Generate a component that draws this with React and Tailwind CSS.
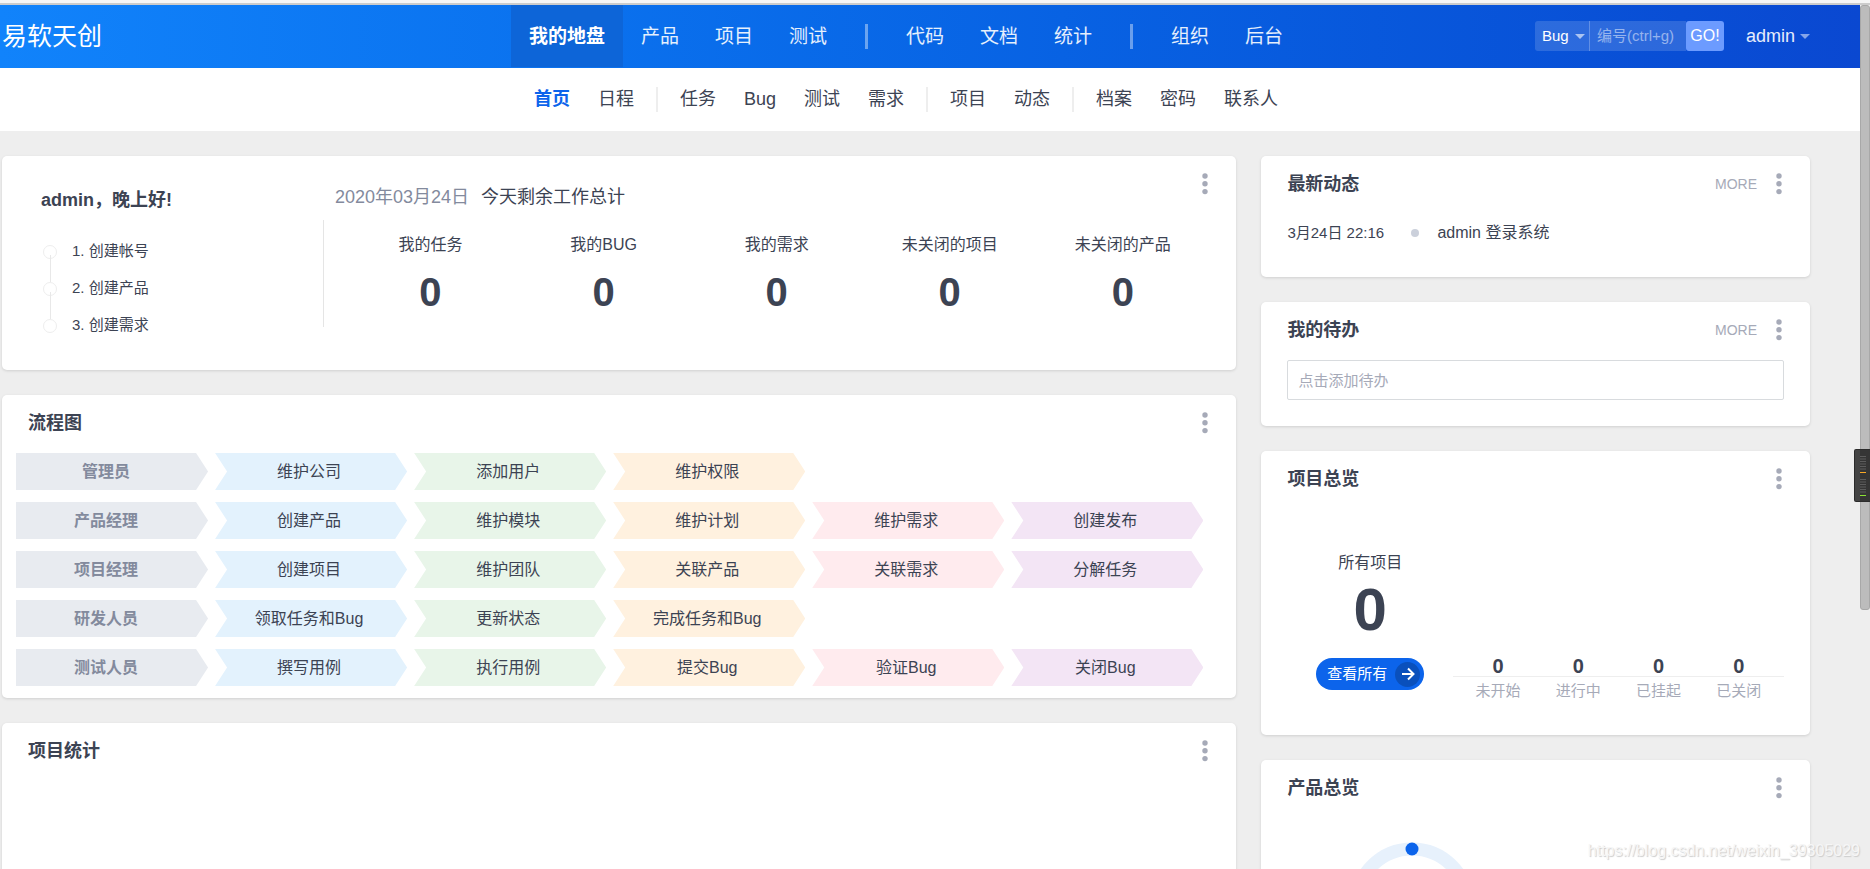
import React from 'react';

const mainNav = [
  ['我的地盘', '产品', '项目', '测试'],
  ['代码', '文档', '统计'],
  ['组织', '后台']
];

const subNav = [
  ['首页', '日程'],
  ['任务', 'Bug', '测试', '需求'],
  ['项目', '动态'],
  ['档案', '密码', '联系人']
];

const steps = ['1. 创建帐号', '2. 创建产品', '3. 创建需求'];

const workload = [
  { label: '我的任务', count: 0 },
  { label: '我的BUG', count: 0 },
  { label: '我的需求', count: 0 },
  { label: '未关闭的项目', count: 0 },
  { label: '未关闭的产品', count: 0 }
];

const flows = [
  ['管理员', '维护公司', '添加用户', '维护权限'],
  ['产品经理', '创建产品', '维护模块', '维护计划', '维护需求', '创建发布'],
  ['项目经理', '创建项目', '维护团队', '关联产品', '关联需求', '分解任务'],
  ['研发人员', '领取任务和Bug', '更新状态', '完成任务和Bug'],
  ['测试人员', '撰写用例', '执行用例', '提交Bug', '验证Bug', '关闭Bug']
];

const flowColors = [
  'bg-[#e8ebf0]',
  'bg-[#e3f2fd]',
  'bg-[#e8f5e9]',
  'bg-[#fff1df]',
  'bg-[#ffebee]',
  'bg-[#f3e5f5]'
];

const projectStates = [
  { label: '未开始', count: 0 },
  { label: '进行中', count: 0 },
  { label: '已挂起', count: 0 },
  { label: '已关闭', count: 0 }
];

const Caret = ({ className }) => (
  <svg viewBox="0 0 10 5" className={className} aria-hidden="true">
    <path d="M0 0h10L5 5z" fill="currentColor" />
  </svg>
);

const MenuButton = ({ className = '' }) => (
  <button type="button" aria-label="菜单" className={`text-[#a6aab8] ${className}`}>
    <svg viewBox="0 0 6 22" className="block h-[22px] w-1.5" fill="currentColor">
      <circle cx="3" cy="3" r="2.7" />
      <circle cx="3" cy="10.8" r="2.7" />
      <circle cx="3" cy="18.6" r="2.7" />
    </svg>
  </button>
);

const Card = ({ title, more, className = '', children }) => (
  <section className={`rounded-[5px] bg-white shadow-[0_1px_3px_rgba(0,0,0,0.13)] ${className}`}>
    <header className="flex h-[58px] items-center pr-7 pb-0.5 pl-[26px]">
      <h2 className="flex-1 text-[18px] font-bold">{title}</h2>
      {more && (
        <a href="#more" className="mr-[19px] text-[14px] text-[#a6aab8]">
          MORE
        </a>
      )}
      <MenuButton />
    </header>
    {children}
  </section>
);

const Header = () => (
  <header className="grid h-[63px] grid-cols-[1fr_auto_1fr] items-start bg-linear-to-r from-[#1183fb] to-[#0a48d1] pr-[50px] pl-0.5 text-white">
    <h1 className="text-[25px] leading-[62px]">易软天创</h1>

    <nav className="flex items-center text-[19px] leading-[60px]">
      {mainNav.map((group, g) => (
        <React.Fragment key={g}>
          {g > 0 && <span className="mx-5 h-[25px] w-[3px] bg-white/40" />}
          {group.map((item) => (
            <a
              key={item}
              href="#nav"
              className={`px-[18px] pt-0.5 ${
                item === '我的地盘' ? 'bg-[#0d65d8] font-bold' : 'text-white/90'
              }`}
            >
              {item}
            </a>
          ))}
        </React.Fragment>
      ))}
    </nav>

    <div className="flex h-[62px] items-center justify-end">
      <form className="flex h-[30px] text-[15px]" onSubmit={(e) => e.preventDefault()}>
        <div className="relative flex">
          <select
            aria-label="类型"
            className="w-[55px] appearance-none rounded-l-[3px] border-r border-white/25 bg-white/15 pl-[7px] text-white outline-none"
          >
            <option>Bug</option>
          </select>
          <Caret className="pointer-events-none absolute top-[13px] right-[5px] h-[5px] w-[10px] text-white/60" />
        </div>
        <input
          aria-label="编号"
          placeholder="编号(ctrl+g)"
          className="w-24 bg-white/15 px-[7px] outline-none placeholder:text-white/50"
        />
        <button type="submit" className="w-[38px] rounded-[3px] bg-[#6c9bff] text-[16px]">
          GO!
        </button>
      </form>
      <button type="button" className="ml-[22px] flex items-center gap-[5px] text-[18px]">
        <span className="text-white/90">admin</span>
        <Caret className="h-[5px] w-[10px] text-white/50" />
      </button>
    </div>
  </header>
);

const SubNav = () => (
  <nav className="flex h-[63px] items-center justify-center bg-white pr-[50px] pl-0.5 text-[18px]">
    {subNav.map((group, g) => (
      <React.Fragment key={g}>
        {g > 0 && <span className="mx-2 h-[25px] w-0.5 bg-[#eee]" />}
        {group.map((item) => (
          <a
            key={item}
            href="#sub"
            className={`px-3.5 ${item === '首页' ? 'font-bold text-[#0c64eb]' : ''}`}
          >
            {item}
          </a>
        ))}
      </React.Fragment>
    ))}
  </nav>
);

const Welcome = () => (
  <section className="relative grid grid-cols-[26%_1fr] rounded-[5px] bg-white shadow-[0_1px_3px_rgba(0,0,0,0.13)]">
    <div className="pt-8 pb-[26px] pl-[39px]">
      <h2 className="text-[18px] leading-6 font-bold">admin，晚上好!</h2>
      <ol className="mt-[21px] pl-0.5 text-[15px]">
        {steps.map((step, idx) => (
          <li key={step} className="relative flex h-[37px] items-center gap-[15px]">
            <span className="size-3.5 rounded-full border border-[#eee]" />
            {idx < steps.length - 1 && (
              <span className="absolute top-[22px] left-[7px] h-[27px] w-px bg-[#e8e8e8]" />
            )}
            {step}
          </li>
        ))}
      </ol>
    </div>

    <div className="pt-[29px]">
      <p className="flex gap-3 pl-3 text-[18px] leading-6">
        <time className="text-[#838a9d]">2020年03月24日</time>
        <span>今天剩余工作总计</span>
      </p>
      <div className="mt-[11px] grid grid-cols-5 border-l border-[#e5e5e5] pt-[13px] pr-[27px] pb-[11px] pl-5 text-center">
        {workload.map((item) => (
          <div key={item.label}>
            <div className="text-[16px] leading-6">{item.label}</div>
            <div className="mt-[11px] text-[40px] leading-[48px] font-bold">{item.count}</div>
          </div>
        ))}
      </div>
    </div>

    <MenuButton className="absolute top-[17px] right-7" />
  </section>
);

const FlowChart = () => (
  <Card title="流程图">
    <div className="space-y-3 pr-[33px] pb-3 pl-3.5">
      {flows.map((row) => (
        <div key={row[0]} className="grid grid-cols-6 gap-[7px] text-center text-[16px] leading-[37px]">
          {row.map((step, idx) =>
            idx === 0 ? (
              <div
                key={step}
                className={`pr-3 font-bold text-[#838a9d] [clip-path:polygon(0_0,calc(100%-12px)_0,100%_50%,calc(100%-12px)_100%,0_100%)] ${flowColors[idx]}`}
              >
                {step}
              </div>
            ) : (
              <a
                key={step}
                href="#flow"
                className={`pr-1 [clip-path:polygon(0_0,calc(100%-12px)_0,100%_50%,calc(100%-12px)_100%,0_100%,12px_50%)] ${flowColors[idx]}`}
              >
                {step}
              </a>
            )
          )}
        </div>
      ))}
    </div>
  </Card>
);

const ProjectOverview = () => (
  <Card title="项目总览">
    <div className="grid grid-cols-3 items-end px-[26px] pt-[42px] pb-8">
      <div className="flex flex-col items-center pb-[13px]">
        <div className="text-[16px] leading-6">所有项目</div>
        <div className="mt-[5px] text-[60px] leading-[60px] font-bold">0</div>
        <a
          href="#all"
          className="mt-[18px] flex h-8 items-center gap-2 rounded-full bg-[#0c64eb] pr-1 pl-[11px] text-[15px] text-white"
        >
          查看所有
          <span className="flex size-[25px] items-center justify-center rounded-full bg-[#0a50bc]">
            <svg viewBox="0 0 14 14" className="size-3.5" fill="none" stroke="currentColor" strokeWidth="2">
              <path d="M1 7h11M7 1.5L12.5 7L7 12.5" />
            </svg>
          </span>
        </a>
      </div>
      <dl className="col-span-2 text-center">
        <div className="grid grid-cols-4 border-b border-[#eee] px-[5px] text-[20px] leading-5 font-bold">
          {projectStates.map((state) => (
            <dd key={state.label}>{state.count}</dd>
          ))}
        </div>
        <div className="grid grid-cols-4 px-[5px] pt-0.5 text-[15px] leading-6 text-[#a6aab8]">
          {projectStates.map((state) => (
            <dt key={state.label}>{state.label}</dt>
          ))}
        </div>
      </dl>
    </div>
  </Card>
);

const ProductOverview = () => (
  <Card title="产品总览">
    <div className="grid grid-cols-2 px-[26px] pt-6 pb-8">
      <svg viewBox="0 0 126 126" className="size-[126px] justify-self-center">
        <circle cx="63" cy="63" r="56" fill="none" stroke="#e7f1fc" strokeWidth="13" />
        <circle cx="63" cy="7" r="6.5" fill="#0c64eb" />
      </svg>
    </div>
  </Card>
);

// small level meter docked on the window edge
const Meter = () => (
  <svg viewBox="0 0 16 53" className="absolute top-[449px] right-0 h-[53px] w-4">
    <path d="M16 0H2a2 2 0 0 0-2 2v49a2 2 0 0 0 2 2h14z" fill="#2b2b2b" />
    <path d="M6 1H2a1 1 0 0 0-1 1v49a1 1 0 0 0 1 1h4z" fill="#444" />
    <path d="M6 1h10v51H6z" fill="#353535" />
    <path d="M6 7.5h6M6 10h6M6 12.5h6M6 15h6M6 17.5h6M6 20h6" stroke="#5c5c5c" />
    <path d="M6 23.5h6" stroke="#f9a825" />
    <path d="M6 30.5h6M6 33h6M6 35.5h6M6 38h6M6 40.5h6M6 43h6" stroke="#5c5c5c" />
    <path d="M6 46.5h6" stroke="#8be234" />
  </svg>
);

const App = () => {
  return (
    <div className="relative flex h-screen flex-col overflow-hidden bg-[#eee] font-['Liberation_Sans','Noto_Sans_CJK_SC',sans-serif] text-[#3c4353]">
      <div className="h-[5px] shrink-0 border-b-2 border-[#ccc] bg-[#f6f6f6]" />

      <div className="flex min-h-0 flex-1">
        <div className="min-w-0 flex-1 overflow-hidden">
          <Header />
          <SubNav />

          <main className="grid grid-cols-[9fr_4fr] items-start gap-[25px] pt-[25px] pr-[50px] pl-0.5">
            <div className="flex flex-col gap-[25px]">
              <Welcome />
              <FlowChart />
              <Card title="项目统计" className="min-h-[240px]" />
            </div>

            <div className="flex flex-col gap-[25px]">
              <Card title="最新动态" more>
                <ul className="px-[26px] pb-[25px]">
                  <li className="flex h-[38px] items-center">
                    <time className="w-[124px] text-[15px]">3月24日 22:16</time>
                    <span className="mr-[18px] size-2 rounded-full bg-[#cbd0db]" />
                    <a href="#log" className="text-[16px]">
                      admin 登录系统
                    </a>
                  </li>
                </ul>
              </Card>

              <Card title="我的待办" more>
                <div className="px-[26px] pb-[26px]">
                  <input
                    aria-label="添加待办"
                    placeholder="点击添加待办"
                    className="block h-10 w-full rounded-[2px] border border-[#d8dbde] px-2.5 text-[15px] outline-none placeholder:text-[#a6aab8]"
                  />
                </div>
              </Card>

              <ProjectOverview />
              <ProductOverview />
            </div>
          </main>
        </div>

        <div className="w-2.5 bg-[#eee]">
          <div className="h-[70%] rounded-[3px] border border-[#a8a8a8] bg-[#bcbcbc]" />
        </div>
      </div>

      <Meter />
      <p className="pointer-events-none absolute right-2.5 bottom-1.5 text-[16px] leading-6 text-[#f6f6f6] [text-shadow:1px_1px_1px_#ccc]">
        https://blog.csdn.net/weixin_39305029
      </p>
    </div>
  );
};

export default App;
